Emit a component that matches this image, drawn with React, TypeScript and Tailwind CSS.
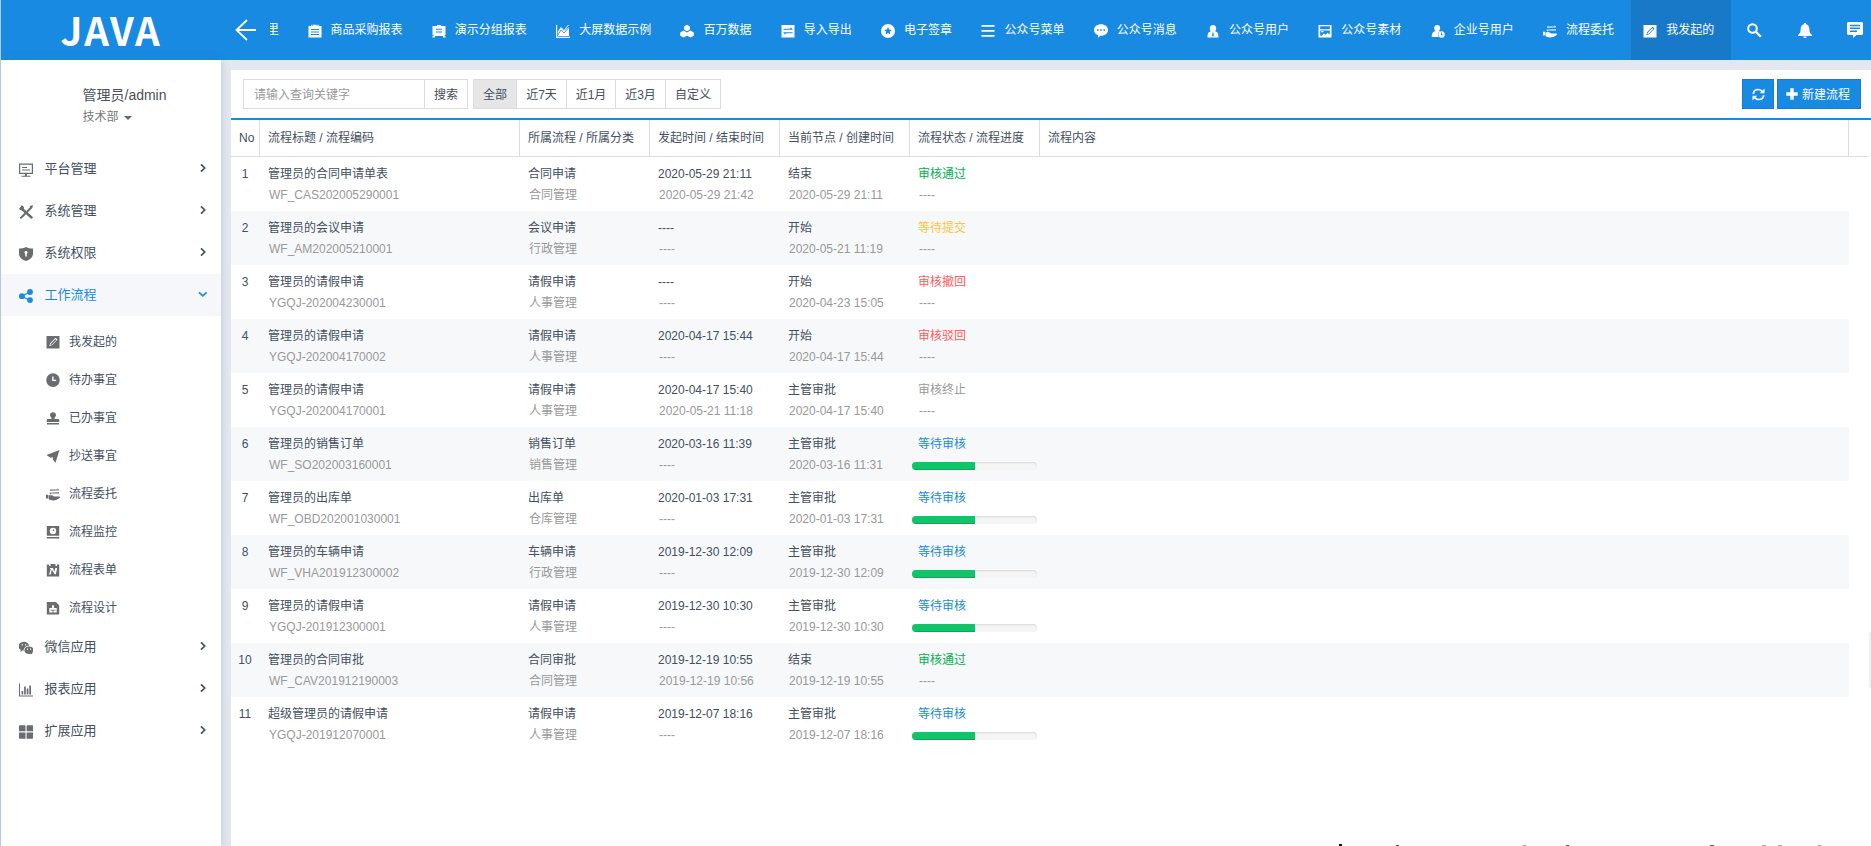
import type { ReactNode } from 'react';
import clsx from 'clsx';

const Svg = ({ children, size = 14 }: { children: ReactNode; size?: number }) => (
    <svg width={size} height={size} viewBox="0 0 14 14" fill="currentColor" className="shrink-0">
        {children}
    </svg>
);

const icons: Record<string, ReactNode> = {
    clipboard: <path fillRule="evenodd" d="M.5 2h2.800V.8h1.200V2h5V.8h1.200V2h2.800v11.500H.5zM3 5v1h8V5zM3 7.500v1h8v-1zM3 10v1h8v-1zM5.200.8h3.600V2H5.200z" />,
    board: <path fillRule="evenodd" d="M.5 2h4l1-1h3l1 1h4v9h-1v1h1v1.500h-2.500V12H3v1.500H.5V12h1v-1h-1zM4 4.800v1h6v-1zM4 7.500v1h6v-1z" />,
    area: (
        <>
            <path d="M0 1h1.200v11.800H14V14H0z" />
            <path d="M2 12V9l3-5 3 3 5-4v9z" />
            <path d="M1.8 8.5 5 3.5l3 3L12.5 1" fill="none" stroke="currentColor" strokeWidth="1" />
            <path d="M2 11 5 6l3 3 5.5-6" fill="none" stroke="#188ae2" strokeWidth=".8" />
        </>
    ),
    cubes: <path d="M7 .8 10 2.400v3.200L7 7.300 4 5.600V2.400zM3.600 6.600 7 8.400v3.400l-3.400 1.700-3.400-1.700V8.400zM10.400 6.600l3.400 1.800v3.400l-3.400 1.700L7 11.800V8.400z" />,
    exchange: <path fillRule="evenodd" d="M.5 1h13v12.500H.5zM2.500 5.800h9V4.700h-1V3.300L8.700 4.700H2.500zM11.500 8.200h-9v1.100h1v1.400l1.800-1.400h6.200z" />,
    star: <path fillRule="evenodd" d="M7 0a7 7 0 1 1 0 14A7 7 0 0 1 7 0zm0 3.100L5.900 5.600l-2.700.3 2 1.800-.6 2.700L7 9l2.400 1.400-.6-2.700 2-1.800-2.700-.3z" />,
    bars: <path d="M.5 1h13v1.800H.5zM.5 6h13v1.800H.5zM.5 11h13v1.800H.5z" />,
    comment: <path fillRule="evenodd" d="M7 .3c4 0 7 2.400 7 5.700s-3 5.800-7 5.800l-.8-.1-2.200 2.300v-2.800C1.500 10.300 0 8.500 0 6 0 2.700 3 .3 7 .3zM3 5.300v1.400h1.600V5.300zM6.200 5.300v1.400h1.600V5.300zM9.400 5.300v1.400H11V5.300z" />,
    person: <path fillRule="evenodd" d="M7 1c2 0 3.200 1.400 3.200 3.200 0 1.300-.5 2.300-1.200 3 2.400.6 3.500 2 3.500 6.300h-11c0-4.300 1.100-5.700 3.500-6.300-.7-.7-1.200-1.700-1.200-3C3.800 2.400 5 1 7 1zM6.500 8.500 6.100 12.300h1.800L7.500 8.500z" />,
    picture: <path fillRule="evenodd" d="M.5 1h13v12.500H.5zM2.200 2.200v3h9.600v-3zM2.200 6.400v5.400h1.500L6 9.500l1.500 1.200 2-2 2.300 2V6.400zM3.300 7h2.200v1.300H3.300z" />,
    userClock: (
        <>
            <path d="M6.200 1c1.800 0 3 1.300 3 3 0 1.200-.5 2.200-1.200 2.900L9 7.200A4 4 0 0 0 7.500 13H.7c0-3.600 1-5.300 3.600-6-.7-.6-1.100-1.600-1.100-3 0-1.700 1.200-3 3-3z" />
            <path fillRule="evenodd" d="M10.500 7.300a3.200 3.200 0 1 1 0 6.400 3.200 3.200 0 0 1 0-6.400zm-.6 1.200v2.800h2v-.9h-1V8.500z" />
        </>
    ),
    hand: (
        <>
            <path d="M4 2.600h7.500V1.200L13.500 3.200 4 3.800zM13 6.500H5v1.200L3.200 5.700 13 5.300z" />
            <path d="M0 7.800h2.300v3.700H0zM2.800 8.300h3.400l1.800 1.300h5.400c1 0 .6 1.300-.4 1.900-1.900 1.200-3.800 2-5.900 2-1.900 0-3.300-.5-4.300-1.200z" />
        </>
    ),
    pencil: <path fillRule="evenodd" d="M.5 1h13v12.500H.5zM3.400 11l.7-2.700 5.400-5.600 2 1.900-5.500 5.600zM4.300 10.100 5.800 9.700l4.500-4.700-1-1-4.500 4.700z" />,
    monitor: (
        <>
            <path fillRule="evenodd" d="M0 .5h14v10.500H0zM1.200 1.700v8.100h11.600V1.700z" />
            <path d="M3 4h5v1H3zM3 6.500h8v1H3zM2.500 12.700h9v1h-9zM6 11h2v2H6z" />
        </>
    ),
    tools: (
        <>
            <path d="M2 12.700 12.500 2.300" stroke="currentColor" strokeWidth="2" strokeLinecap="round" />
            <path d="M2 3 12.500 12.500" stroke="currentColor" strokeWidth="2.400" strokeLinecap="round" />
            <path d="m0 3.500 1.300-.4L2 1.500l-.5-1c2-.5 4 .8 3.500 3.200L3.700 5C2 5.600.5 5 0 3.500zM10.500 1.500 13.500 0 14 .5l-1.500 3z" />
        </>
    ),
    shield: <path fillRule="evenodd" d="M7 0c2 1.300 4.400 1.600 7 1.600v4.900c0 4-3.300 6.300-7 7.500C3.300 12.800 0 10.500 0 6.500V1.600C2.600 1.600 5 1.300 7 0zm0 4a1.500 1.500 0 0 0-.8 2.800v2.700h1.600V6.800A1.500 1.500 0 0 0 7 4z" />,
    share: (
        <>
            <path d="m11 2.800-8 4.400 8 4.300" fill="none" stroke="currentColor" strokeWidth="1.300" />
            <circle cx="11" cy="3" r="2.900" />
            <circle cx="2.900" cy="7.200" r="2.900" />
            <circle cx="11" cy="11.100" r="2.900" />
        </>
    ),
    clock: <path fillRule="evenodd" d="M7 .3a6.800 6.800 0 1 1 0 13.600A6.800 6.800 0 0 1 7 .3zM6.200 3.500v4.600h4V6.800H7.600V3.500z" />,
    stamp: <path d="M7 1.300c1.800 0 3 1.200 3 2.900 0 1.200-1.500 2-1.500 3.800H12c.8 0 1.300.5 1.300 1.300V11H.7V9.300C.7 8.500 1.200 8 2 8h3.500C5.500 6.200 4 5.400 4 4.200c0-1.700 1.200-2.900 3-2.900zM1 12h12v1.500H1z" />,
    plane: <path d="M13.500 1 9.500 13.800 7 10.800l-.5-3L4.800 9 .5 6z" />,
    camera: <path fillRule="evenodd" d="M.8 1h12.400v9.800H.8zM7 2.800a3.200 3.200 0 1 0 0 6.400 3.200 3.200 0 0 0 0-6.400zM.8 12h12.400v1.500H.8zM6.800 4.500h1.400v1.600H6.800z" />,
    form: <path fillRule="evenodd" d="M.8 1.500H3V3h1.500V1h5v2H11V1.500h2.200v12H.8zM3 11.500h1.700l1-4.500H6l2.500 4 1.200.5L11 6V5H9.300L8.500 8.500 6.800 5H4v1h.8z" />,
    design: <path fillRule="evenodd" d="M.8 1h9l3.400 3.200v9.300H.8zM6 4.200V7H3.300v4.500h7.400V7H8V4.200zM4.500 8.800v.8h5v-.8zM6.600 9.600v1.900h.8V9.600z" />,
    wechat: (
        <>
            <path fillRule="evenodd" d="M5 .8c2.700 0 4.800 1.700 5.200 4-3.300 0-5.700 2.100-5.500 4.800l-1.100-.1L1.300 11l.5-2.200C.4 8-.6 6.800-.6 5.300-.6 2.700 2 .8 5 .8zM2.600 3.300v1.300h1.300V3.300zm3.400 0v1.300h1.300V3.300z" />
            <path fillRule="evenodd" d="M10 5.500c2.600 0 4.600 1.600 4.600 3.700 0 1.200-.6 2.200-1.600 2.800l.3 1.500-1.800-.8-1.500.2c-2.600 0-4.600-1.600-4.600-3.700S7.400 5.500 10 5.500zM8 7.500v1.200h1.100V7.500zm3 0v1.200h1.100V7.500z" />
        </>
    ),
    chart: <path d="M0 .5h1v12h13v1H0zM2.500 8h1.700v3.500H2.500zM5.100 3.500h1.700v8H5.100zM7.700 5.500h1.700v6H7.700zM10.300 2.500H12v9h-1.700z" />,
    grid: <path d="M1 .3h4.500c.6 0 1 .4 1 1v5H0v-5c0-.6.400-1 1-1zM8.500.3H13c.6 0 1 .4 1 1v5H7.600v-5c0-.6.300-1 .9-1zM0 7.500h6.500v6.200H1c-.6 0-1-.4-1-1zM7.600 7.500H14v5.200c0 .6-.4 1-1 1H7.600z" />,
};

const tabs = [
    ['clipboard', '商品采购报表'],
    ['board', '演示分组报表'],
    ['area', '大屏数据示例'],
    ['cubes', '百万数据'],
    ['exchange', '导入导出'],
    ['star', '电子签章'],
    ['bars', '公众号菜单'],
    ['comment', '公众号消息'],
    ['person', '公众号用户'],
    ['picture', '公众号素材'],
    ['userClock', '企业号用户'],
    ['hand', '流程委托'],
    ['pencil', '我发起的'],
];

const menu = [
    { icon: 'monitor', label: '平台管理' },
    { icon: 'tools', label: '系统管理' },
    { icon: 'shield', label: '系统权限' },
    {
        icon: 'share',
        label: '工作流程',
        children: [
            ['pencil', '我发起的'],
            ['clock', '待办事宜'],
            ['stamp', '已办事宜'],
            ['plane', '抄送事宜'],
            ['hand', '流程委托'],
            ['camera', '流程监控'],
            ['form', '流程表单'],
            ['design', '流程设计'],
        ],
    },
    { icon: 'wechat', label: '微信应用' },
    { icon: 'chart', label: '报表应用' },
    { icon: 'grid', label: '扩展应用' },
];

const columns = ['流程标题 / 流程编码', '所属流程 / 所属分类', '发起时间 / 结束时间', '当前节点 / 创建时间', '流程状态 / 流程进度'];

const NONE = '----';

const statusColor: Record<string, string> = {
    审核通过: 'text-[#00b050]',
    等待提交: 'text-[#ffc43e]',
    审核撤回: 'text-[#ff5b5b]',
    审核驳回: 'text-[#ff5b5b]',
    审核终止: 'text-[#999]',
    等待审核: 'text-[#188ae2]',
};

// title, code, flow, category, started, ended, node, created, status, progress
type Row = [string, string, string, string, string, string, string, string, string, number?];

const rows: Row[] = [
    ['管理员的合同申请单表', 'WF_CAS202005290001', '合同申请', '合同管理', '2020-05-29 21:11', '2020-05-29 21:42', '结束', '2020-05-29 21:11', '审核通过'],
    ['管理员的会议申请', 'WF_AM202005210001', '会议申请', '行政管理', NONE, NONE, '开始', '2020-05-21 11:19', '等待提交'],
    ['管理员的请假申请', 'YGQJ-202004230001', '请假申请', '人事管理', NONE, NONE, '开始', '2020-04-23 15:05', '审核撤回'],
    ['管理员的请假申请', 'YGQJ-202004170002', '请假申请', '人事管理', '2020-04-17 15:44', NONE, '开始', '2020-04-17 15:44', '审核驳回'],
    ['管理员的请假申请', 'YGQJ-202004170001', '请假申请', '人事管理', '2020-04-17 15:40', '2020-05-21 11:18', '主管审批', '2020-04-17 15:40', '审核终止'],
    ['管理员的销售订单', 'WF_SO202003160001', '销售订单', '销售管理', '2020-03-16 11:39', NONE, '主管审批', '2020-03-16 11:31', '等待审核', 50],
    ['管理员的出库单', 'WF_OBD202001030001', '出库单', '仓库管理', '2020-01-03 17:31', NONE, '主管审批', '2020-01-03 17:31', '等待审核', 50],
    ['管理员的车辆申请', 'WF_VHA201912300002', '车辆申请', '行政管理', '2019-12-30 12:09', NONE, '主管审批', '2019-12-30 12:09', '等待审核', 50],
    ['管理员的请假申请', 'YGQJ-201912300001', '请假申请', '人事管理', '2019-12-30 10:30', NONE, '主管审批', '2019-12-30 10:30', '等待审核', 50],
    ['管理员的合同审批', 'WF_CAV201912190003', '合同审批', '合同管理', '2019-12-19 10:55', '2019-12-19 10:56', '结束', '2019-12-19 10:55', '审核通过'],
    ['超级管理员的请假申请', 'YGQJ-201912070001', '请假申请', '人事管理', '2019-12-07 18:16', NONE, '主管审批', '2019-12-07 18:16', '等待审核', 50],
];

const gridCols = 'grid grid-cols-[29px_260px_130px_130px_130px_130px_1fr]';

function Header() {
    return (
        <header className="flex h-[60px] shrink-0 items-center bg-[#188ae2] text-white">
            <div className="flex w-[220px] shrink-0 justify-center pb-[2px] font-['Noto_Sans_CJK_SC'] text-[38.5px] leading-[58px] font-bold tracking-[1.8px]">
                JAVA
            </div>
            <svg width="22" height="22" viewBox="0 0 22 22" className="ml-[14px] shrink-0" fill="none" stroke="currentColor" strokeWidth="1.8">
                <path d="M21 11H1.500M12 1 1.500 11 12 21" />
            </svg>
            <div className="ml-[13px] flex w-[9px] shrink-0 justify-end overflow-hidden whitespace-nowrap">里</div>
            <nav className="ml-[16px] flex h-full shrink-0">
                {tabs.map(([icon, label], i) => (
                    <div
                        key={label}
                        className={clsx('flex h-full items-center pr-[16.8px] pl-3', i === tabs.length - 1 && 'bg-[#1879c9]')}
                    >
                        <span className="mt-[2px] flex w-[15px] justify-center"><Svg>{icons[icon]}</Svg></span>
                        <span className="ml-[8.5px] whitespace-nowrap">{label}</span>
                    </div>
                ))}
            </nav>
            <div className="flex flex-1 items-center pl-[16px]">
                <svg width="15" height="15" viewBox="0 0 15 15" fill="none" stroke="currentColor" className="shrink-0">
                    <circle cx="5.500" cy="5.500" r="4.300" strokeWidth="2" />
                    <path d="m8.800 8.800 5 5" strokeWidth="2.300" />
                </svg>
                <svg width="14" height="15" viewBox="0 0 14 15" fill="currentColor" className="ml-[36px] shrink-0">
                    <path d="M6 0h2v1.300c2 .5 3.300 2.200 3.300 4.300C11.300 9 12 10.500 14 12v1H0v-1c2-1.500 2.700-3 2.700-6.400 0-2.100 1.300-3.800 3.300-4.300zM5.300 13.500h3.400c0 2-3.400 2-3.400 0z" />
                </svg>
                <svg width="16" height="16" viewBox="0 0 16 16" fill="currentColor" className="ml-[35px] shrink-0">
                    <path fillRule="evenodd" d="M1.500 0h13c.8 0 1.500.7 1.500 1.500v10c0 .8-.7 1.500-1.500 1.500H9.500L6 16v-3H1.500C.7 13 0 12.300 0 11.500v-10C0 .7.700 0 1.500 0zM3 2.800v1.400h10V2.800zM3 5.600V7h10V5.600zM3 8.500v1.400h7V8.500z" />
                </svg>
            </div>
        </header>
    );
}

function Sidebar() {
    return (
        <aside className="z-10 w-[220px] shrink-0 bg-white shadow-[0_0_8px_rgba(90,100,130,0.25)]">
            <div className="h-[88px] pt-6 pl-[81.500px]">
                <div className="text-[14px] leading-[22px] text-[#4a5058]">管理员/admin</div>
                <div className="flex items-center text-[12px] leading-[22px] text-[#777]">
                    技术部
                    <span className="mt-[2px] ml-[5px] border-x-4 border-t-4 border-x-transparent border-t-[#666]" />
                </div>
            </div>
            {menu.map((item) => (
                <div key={item.label}>
                    <div className={clsx('flex h-[42px] items-center pl-[18px] text-[13px]', item.children ? 'bg-[#f5f7fb] text-[#188ae2]' : 'text-[#435060]')}>
                        <span className={clsx('mt-px', !item.children && 'text-[#6a6c70]')}><Svg>{icons[item.icon]}</Svg></span>
                        <span className="ml-[11.500px] flex-1">{item.label}</span>
                        <svg width="10" height="10" viewBox="0 0 10 10" fill="none" stroke="currentColor" strokeWidth="1.700" className="mr-[13px] mb-[2px]">
                            <path d={item.children ? 'M1 3.300 4.800 6.800 8.600 3.300' : 'm3 1.300 3.700 3.700L3 8.700'} />
                        </svg>
                    </div>
                    {item.children && (
                        <div className="pt-[6px]">
                            {item.children.map(([icon, label]) => (
                                <div key={label} className="flex h-[38px] items-center pt-[2px] pl-[45px] text-[12px] text-[#435060]">
                                    <span className="text-[#6a6c70]"><Svg>{icons[icon]}</Svg></span>
                                    <span className="ml-[9px]">{label}</span>
                                </div>
                            ))}
                        </div>
                    )}
                </div>
            ))}
        </aside>
    );
}

function Toolbar() {
    const ranges: [string, string][] = [
        ['全部', 'w-[44px] bg-[#e6e6e6]'],
        ['近7天', 'w-[51px] -ml-px'],
        ['近1月', 'w-[50px] -ml-px'],
        ['近3月', 'w-[51px] -ml-px'],
        ['自定义', 'w-[56px] -ml-px'],
    ];

    return (
        <div className="flex h-[50px] items-center border-b-2 border-[#188ae2] pr-[10px] pl-3">
            <div className="flex h-[30px] w-[182px] items-center border border-[#dcdcdc] pt-[2px] pl-[10px] text-[#999]">请输入查询关键字</div>
            <div className="-ml-px flex h-[30px] w-[44px] items-center justify-center border border-[#dcdcdc] pt-px">搜索</div>
            <div className="ml-[5px] flex">
                {ranges.map(([label, cls]) => (
                    <div key={label} className={clsx('flex h-[30px] items-center justify-center border border-[#dcdcdc] pt-[2px]', cls)}>{label}</div>
                ))}
            </div>
            <div className="ml-auto flex gap-[3px] text-white">
                <div className="flex h-[30px] w-8 items-center justify-center border border-[#167ccb] bg-[#188ae2]">
                    <svg width="13" height="13" viewBox="0 0 13 13" fill="none" stroke="currentColor" strokeWidth="1.700" className="mt-px">
                        <path d="M1.300 6C1.500 3.300 3.600 1.500 6.200 1.500c1.900 0 3.300.8 4.300 2.300M11.700 7c-.2 2.700-2.300 4.500-4.900 4.500-1.900 0-3.300-.8-4.300-2.300" />
                        <path d="M12.500.5v4.700H7.800zM.5 12.500V7.800h4.700z" fill="currentColor" stroke="none" />
                    </svg>
                </div>
                <div className="flex h-[30px] w-[84px] items-center border border-[#167ccb] bg-[#188ae2] pl-[8px]">
                    <svg width="12" height="12" viewBox="0 0 12 12" fill="currentColor"><path d="M4.300.3h3.400v4h4v3.400h-4v4H4.300v-4h-4V4.300h4z" /></svg>
                    <span className="mt-px ml-1 whitespace-nowrap">新建流程</span>
                </div>
            </div>
        </div>
    );
}

function Cell({ top, bottom, color }: { top: string; bottom: string; color?: string }) {
    return (
        <div className="pt-[7px] pl-2 leading-[21px] whitespace-nowrap">
            <div className={color}>{top}</div>
            <div className="pl-px text-[#999]">{bottom}</div>
        </div>
    );
}

function Table() {
    return (
        <div>
            <div className="mr-[3px] flex h-[37px] border-b border-[#dcdcdc] leading-[37px]">
                <div className={clsx(gridCols, 'w-[1618px]')}>
                    <div className="border-r border-[#dcdcdc] pl-2">No</div>
                    {columns.map((label) => (
                        <div key={label} className="border-r border-[#dcdcdc] pl-2 whitespace-nowrap">{label}</div>
                    ))}
                    <div className="border-r border-[#dcdcdc] pl-2">流程内容</div>
                </div>
            </div>
            {rows.map(([title, code, flow, category, started, ended, node, created, status, progress], i) => (
                <div key={code} className={clsx(gridCols, 'h-[54px] w-[1618px]', i % 2 === 1 && 'bg-[#f7f8fa]')}>
                    <div className="pt-[7px] pr-px text-center leading-[21px]">{i + 1}</div>
                    <Cell top={title} bottom={code} />
                    <Cell top={flow} bottom={category} />
                    <Cell top={started} bottom={ended} />
                    <Cell top={node} bottom={created} />
                    {progress ? (
                        <div className="pt-[7px] leading-[21px]">
                            <div className={clsx('pl-2', statusColor[status])}>{status}</div>
                            <div className="mt-[7px] ml-[2px] h-2 w-[125px] overflow-hidden rounded bg-[#f5f5f5] shadow-[inset_0_1px_2px_rgba(0,0,0,0.12)]">
                                <div className="h-full bg-[#10c469] shadow-[inset_0_-1px_0_rgba(0,0,0,0.15)]" style={{ width: `${progress}%` }} />
                            </div>
                        </div>
                    ) : (
                        <Cell top={status} bottom={NONE} color={statusColor[status]} />
                    )}
                    <div />
                </div>
            ))}
        </div>
    );
}

export default function App() {
    return (
        <div className="relative flex h-[846px] w-[1871px] flex-col overflow-hidden border-l border-[#b3cbd8] font-['Liberation_Sans','Noto_Sans_CJK_SC',sans-serif] text-[12px] text-[#435060]">
            <Header />
            <div className="flex min-h-0 flex-1 bg-[#e4e7f0]">
                <Sidebar />
                <main className="mt-[10px] ml-[10px] flex-1 bg-white">
                    <Toolbar />
                    <Table />
                </main>
            </div>

            {/* drawer handle */}
            <div className="absolute top-[632px] right-0 h-[56px] w-[2px] rounded-l bg-[#f0f0f0]" />

            {/* top edge of the floating caption */}
            <svg width="490" height="3" viewBox="0 0 490 3" className="absolute bottom-0 left-[1338px]">
                <path d="M0 1h3v2H0z" fill="#111" />
                <path d="M57 2h3v1h-3zM227 2h3v1h-3zM371 2h4v1h-4z" fill="#555" />
                <path d="M184 2h3v1h-3zM423 2h4v1h-4zM439 2h4v1h-4zM479 2h3v1h-3z" fill="#aaa" />
            </svg>
        </div>
    );
}
